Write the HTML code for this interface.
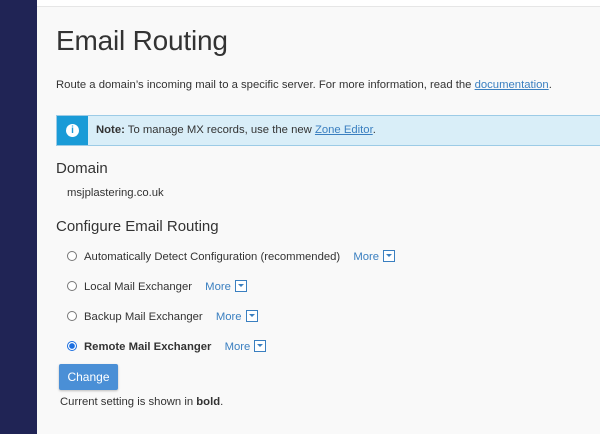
<!DOCTYPE html>
<html><head><meta charset="utf-8"><style>
*{margin:0;padding:0;box-sizing:border-box}
body{width:600px;height:434px;overflow:hidden;background:#f9f9f9;font-family:"Liberation Sans",sans-serif;color:#333;position:relative}
.side{position:absolute;left:0;top:0;width:37px;height:434px;background:#202455}
.top{position:absolute;left:37px;top:0;right:0;height:7px;background:#fff;border-bottom:1px solid #e6e6e6}
.a{position:absolute;white-space:nowrap}
h1{position:absolute;left:56px;top:25px;font-size:28px;font-weight:300;color:#333;letter-spacing:-0.2px}
.t{font-size:11.3px}
a{color:#3a7fc0;text-decoration:underline}
.note{position:absolute;left:56px;top:115px;width:560px;height:31px;background:#d9eef8;border:1px solid #9ccbe6}
.ic{position:absolute;left:0;top:0;width:31px;height:29px;background:#1a9bd7}
.ic span{position:absolute;left:9px;top:8px;width:13px;height:13px;border-radius:50%;background:#fff;color:#1a9bd7;font-size:10px;font-weight:bold;text-align:center;line-height:13px}
h2{position:absolute;font-size:15px;font-weight:normal;color:#333}
.r{position:absolute;left:67px;width:10px;height:10px;border:1px solid #777;border-radius:50%;background:#fff}
.r.on{border-color:#1a6ee0;background:radial-gradient(circle,#1a6ee0 0 2.6px,#fff 3px)}
.more{color:#3a7fc0;font-size:11.3px}
.dd{display:inline-block;width:12px;height:12px;border:1px solid #3a7fc0;vertical-align:-2px;margin-left:4px;position:relative;background:#fff}
.dd:after{content:"";position:absolute;left:2px;top:3px;border-left:3px solid transparent;border-right:3px solid transparent;border-top:3.5px solid #3a7fc0}
.btn{position:absolute;left:59px;top:364px;width:59px;height:26px;background:#4a8fd6;color:#fff;font-size:12px;text-align:center;line-height:26px;border-radius:2px;box-shadow:0 1px 2px rgba(0,0,0,.25)}
</style></head><body>
<div class="side"></div><div class="top"></div>
<h1>Email Routing</h1>
<div class="a t" style="left:56px;top:79px">Route a domain’s incoming mail to a specific server. For more information, read the <a>documentation</a>.</div>
<div class="note"><div class="ic"><span>i</span></div><div class="a t" style="left:39px;top:8px"><b>Note:</b> To manage MX records, use the new <a>Zone Editor</a>.</div></div>
<h2 style="left:56px;top:160px">Domain</h2>
<div class="a t" style="left:67px;top:187px">msjplastering.co.uk</div>
<h2 style="left:56px;top:218px">Configure Email Routing</h2>
<div class="r" style="top:251px"></div><div class="a t" style="left:84px;top:250px">Automatically Detect Configuration (recommended) <span class="more" style="margin-left:10px">More</span><span class="dd"></span></div>
<div class="r" style="top:281px"></div><div class="a t" style="left:84px;top:280px">Local Mail Exchanger <span class="more" style="margin-left:10px">More</span><span class="dd"></span></div>
<div class="r" style="top:311px"></div><div class="a t" style="left:84px;top:310px">Backup Mail Exchanger <span class="more" style="margin-left:10px">More</span><span class="dd"></span></div>
<div class="r on" style="top:341px"></div><div class="a t" style="left:84px;top:340px"><b>Remote Mail Exchanger</b> <span class="more" style="margin-left:10px">More</span><span class="dd"></span></div>
<div class="btn">Change</div>
<div class="a t" style="left:60px;top:396px">Current setting is shown in <b>bold</b>.</div>
</body></html>
